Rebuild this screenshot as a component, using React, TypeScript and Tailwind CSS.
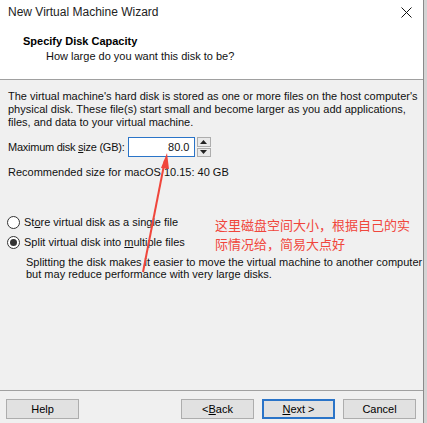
const ui = { fontFamily: '"Liberation Sans", Arial, sans-serif' };

function Radio({ checked, children }: { checked?: boolean; children: React.ReactNode }) {
  return (
    <div className="flex h-[16px] items-center">
      <span className="ml-[7px] flex h-[13px] w-[13px] items-center justify-center rounded-full border border-[#333333] bg-white">
        {checked && <span className="h-[7px] w-[7px] rounded-full bg-[#333333]" />}
      </span>
      <span className="ml-[4px]">{children}</span>
    </div>
  );
}

function Button({ children, primary }: { children: React.ReactNode; primary?: boolean }) {
  return (
    <button
      className={
        "flex h-[20px] w-[73px] items-center justify-center bg-[#e1e1e1] text-[11px] text-black " +
        (primary ? "border-2 border-[#2a74c8]" : "border border-[#adadad]")
      }
    >
      {children}
    </button>
  );
}

export default function App() {
  return (
    <div className="relative flex h-[423px] w-[427px] bg-[#d4d4d4] text-[11px] text-[#111]" style={ui}>
      <div className="flex h-full w-[424px] flex-col border-r border-[#8a8a8a] bg-[#f0f0f0]">
        {/* Title + header */}
        <div className="h-[80px] border-b border-[#a0a0a0] bg-white">
          <div className="flex h-[24px] items-center justify-between pl-[8px] pr-[11px]">
            <span className="text-[12px] text-[#222]">New Virtual Machine Wizard</span>
            <svg width="11" height="11" viewBox="0 0 11 11">
              <path d="M0.5 0.5 L10.5 10.5 M10.5 0.5 L0.5 10.5" stroke="#111" strokeWidth="1" />
            </svg>
          </div>
          <div className="pt-[10px]">
            <div className="pl-[23px] text-[11px] font-bold leading-[15px] text-black">Specify Disk Capacity</div>
            <div className="pl-[46px] leading-[15px]">How large do you want this disk to be?</div>
          </div>
        </div>

        {/* Body */}
        <div className="flex-1 pt-[10px]">
          <p className="pl-[8px] pr-[1px] leading-[13px]">
            The virtual machine's hard disk is stored as one or more files on the host computer's physical disk. These
            file(s) start small and become larger as you add applications, files, and data to your virtual machine.
          </p>

          <div className="mt-[8px] flex h-[20px] items-center pl-[8px]">
            <div className="mr-[3px] whitespace-nowrap tracking-[-0.25px]">
              Maximum disk <span className="underline">s</span>ize (GB):
            </div>
            <div className="flex h-[20px] w-[67px] shrink-0 items-center justify-end border border-[#2a74c8] bg-white pr-[4px]">
              80.0
            </div>
            <div className="ml-[2px] flex h-[20px] w-[14px] shrink-0 flex-col gap-px">
              <span className="flex flex-1 items-center justify-center border border-[#adadad] bg-[#e9e9e9]">
                <svg width="7" height="4" viewBox="0 0 7 4">
                  <path d="M3.5 0 L7 4 L0 4 Z" fill="#222" />
                </svg>
              </span>
              <span className="flex flex-1 items-center justify-center border border-[#adadad] bg-[#e9e9e9]">
                <svg width="7" height="4" viewBox="0 0 7 4">
                  <path d="M0 0 L7 0 L3.5 4 Z" fill="#222" />
                </svg>
              </span>
            </div>
          </div>

          <div className="mt-[9px] pl-[8px] leading-[13px]">Recommended size for macOS 10.15: 40 GB</div>

          <div className="mt-[35px]">
            <Radio>
              St<span className="underline">o</span>re virtual disk as a single file
            </Radio>
          </div>
          <div className="mt-[4px]">
            <Radio checked>
              Split virtual disk into <span className="underline">m</span>ultiple files
            </Radio>
          </div>
          <p className="mt-[6px] pl-[26px] leading-[12px]">
            Splitting the disk makes it easier to move the virtual machine to another computer but may reduce
            performance with very large disks.
          </p>
        </div>

        {/* Footer */}
        <div className="flex h-[33px] items-start border-t border-[#a0a0a0] pl-[6px] pt-[8px]">
          <Button>Help</Button>
          <div className="ml-auto flex gap-[8px] pr-[7px]">
            <Button>
              &lt; <span className="underline">B</span>ack
            </Button>
            <Button primary>
              <span className="underline">N</span>ext &gt;
            </Button>
            <Button>Cancel</Button>
          </div>
        </div>
      </div>

      {/* Red annotation */}
      <div
        className="absolute left-[215px] top-[215px] text-[13px] leading-[19px] text-[#f0463c]"
        style={{ fontFamily: '"Noto Sans CJK SC", sans-serif' }}
      >
        <div>这里磁盘空间大小，根据自己的实</div>
        <div>际情况给，简易大点好</div>
      </div>
      <svg className="pointer-events-none absolute left-0 top-0" width="427" height="423">
        <line x1="165" y1="160" x2="143" y2="272" stroke="#f0463c" strokeWidth="2" />
        <path d="M167 153 L161 168 L169 169 Z" fill="#f0463c" />
      </svg>
    </div>
  );
}
